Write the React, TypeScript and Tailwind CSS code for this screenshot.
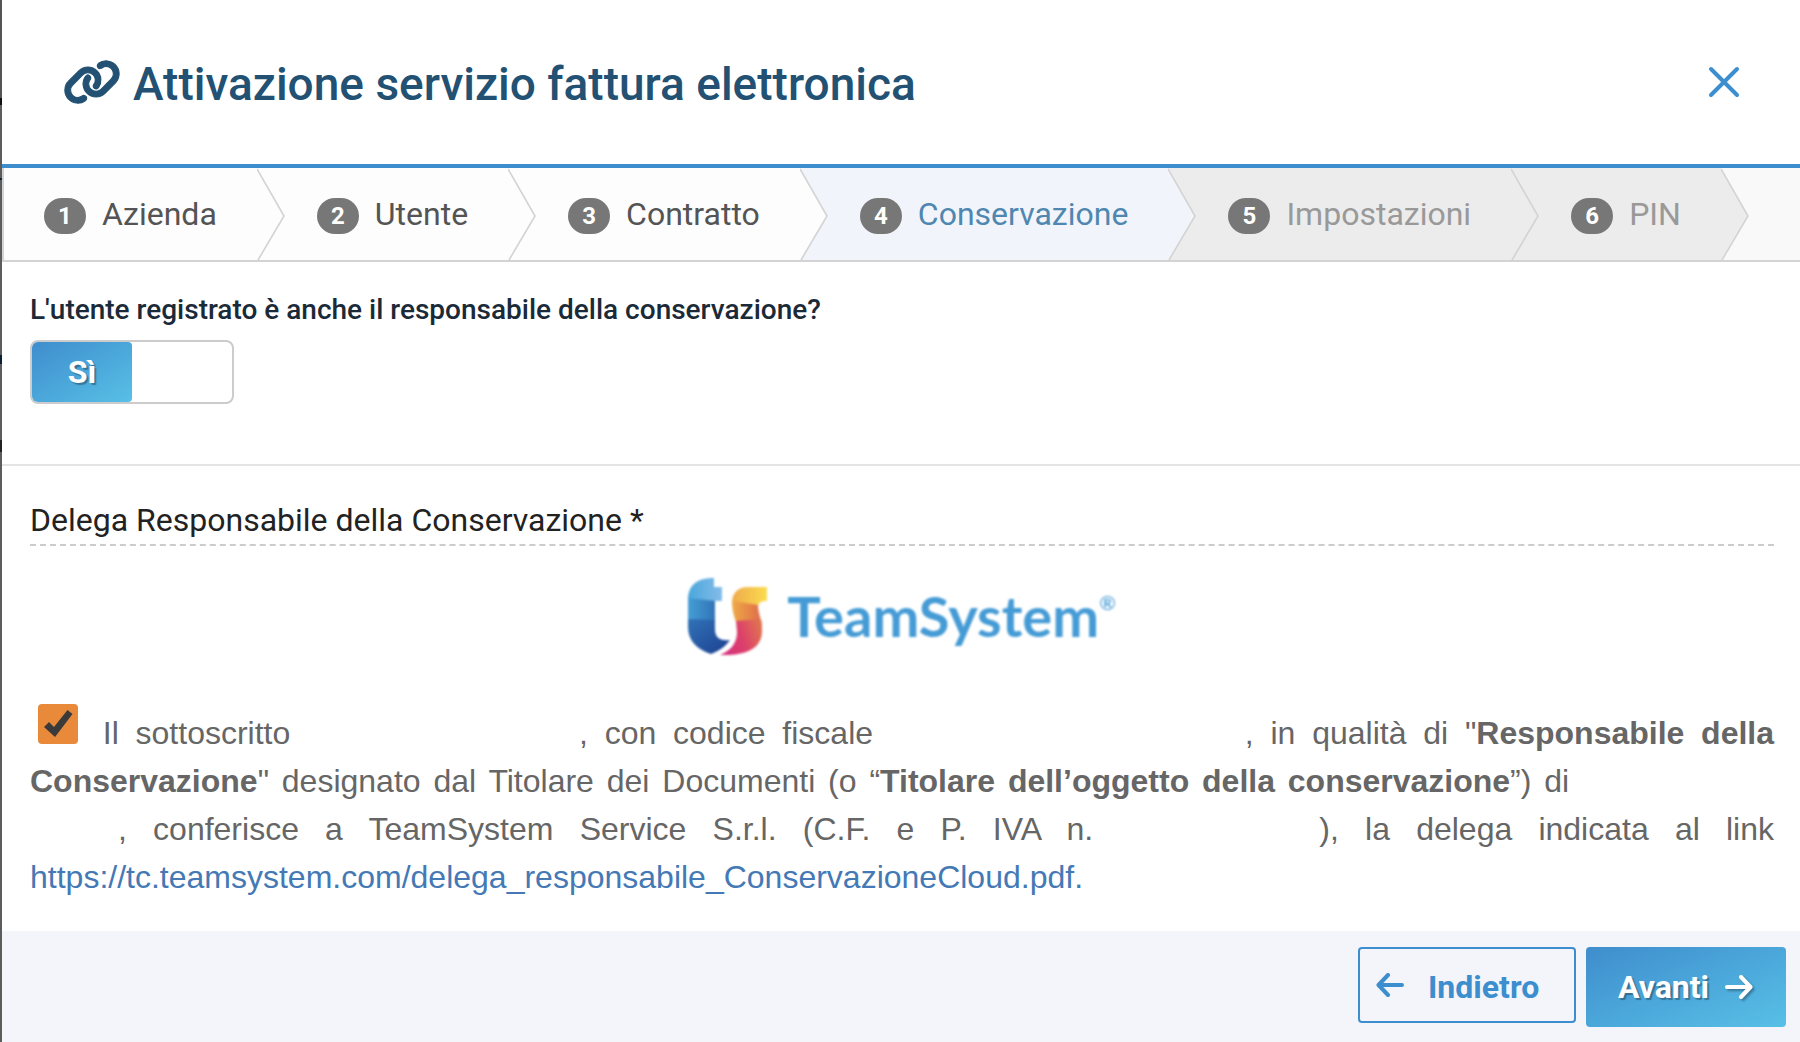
import { useState } from "react";
import { FaLink } from "react-icons/fa6";

type StepState = "done" | "current" | "todo";

const steps: { label: string; state: StepState }[] = [
  { label: "Azienda", state: "done" },
  { label: "Utente", state: "done" },
  { label: "Contratto", state: "done" },
  { label: "Conservazione", state: "current" },
  { label: "Impostazioni", state: "todo" },
  { label: "PIN", state: "todo" },
];

const stepStyles: Record<StepState, string> = {
  done: "bg-[#fdfdfd] text-[#545454] fill-[#fdfdfd]",
  current: "bg-[#f1f5fb] text-[#4f87b0] fill-[#f1f5fb]",
  todo: "bg-[#ececec] text-[#999999] fill-[#ececec]",
};

function Step({ index, label, state }: { index: number; label: string; state: StepState }) {
  return (
    <li className={`relative flex h-full ${stepStyles[state]}`} aria-current={state === "current" ? "step" : undefined}>
      <button
        type="button"
        disabled={state === "todo"}
        className={`flex items-center gap-4 pr-10 text-[32px] leading-none ${index === 1 ? "pl-10" : "pl-15"}`}
      >
        <span className="mt-1 flex h-9 w-[42px] items-center justify-center rounded-[18px] bg-[#777777] text-[24px] font-bold text-white">
          {index}
        </span>
        <span>{label}</span>
      </button>
      <svg className="absolute top-0 left-full z-10 h-full w-7" viewBox="0 0 28 92" preserveAspectRatio="none" aria-hidden="true">
        <path d="M-1 0H0L27 48L1 92H-1Z" />
        <path d="M0 1L27 48L1 92" fill="none" stroke="#d3d3d3" strokeWidth="1.6" />
      </svg>
    </li>
  );
}

function LogoMark() {
  return (
    <svg className="h-20 w-20" viewBox="0 0 80 80" aria-hidden="true">
      <defs>
        <linearGradient id="tTop" x1="0" y1="0" x2="1" y2="0">
          <stop offset="0" stopColor="#4aa6dc" />
          <stop offset="1" stopColor="#84bce8" />
        </linearGradient>
        <linearGradient id="tMid" x1="0" y1="0" x2="1" y2="0">
          <stop offset="0" stopColor="#449fd6" />
          <stop offset="1" stopColor="#3273b6" />
        </linearGradient>
        <linearGradient id="tLow" x1="0" y1="0" x2="1" y2="1">
          <stop offset="0" stopColor="#3173b8" />
          <stop offset="1" stopColor="#1c3f8e" />
        </linearGradient>
        <linearGradient id="sTop" x1="0" y1="0" x2="1" y2="0">
          <stop offset="0" stopColor="#efa94b" />
          <stop offset="1" stopColor="#fbdd4f" />
        </linearGradient>
        <linearGradient id="sMid" x1="0" y1="0" x2="1" y2="0">
          <stop offset="0" stopColor="#efaa45" />
          <stop offset="1" stopColor="#df6a4b" />
        </linearGradient>
        <linearGradient id="sLow" x1="0" y1="0.6" x2="1" y2="0.3">
          <stop offset="0" stopColor="#d6307c" />
          <stop offset="0.5" stopColor="#dc406b" />
          <stop offset="1" stopColor="#e07350" />
        </linearGradient>
      </defs>
      <path d="M0 22C0 7 9 0 26 0V9H34V23H27V25L0 22Z" fill="url(#tTop)" />
      <path d="M0 20L27 23V44L0 42Z" fill="url(#tMid)" />
      <path d="M0 41L27 42V51C27 60 32 63 42 62C37 69 31 73 23 76C8 71 0 62 0 49Z" fill="url(#tLow)" />
      <path d="M44 25C44 15 50 9 60 9H79V23H76C71 24 70 27 70 30L44 24Z" fill="url(#sTop)" />
      <path d="M44 23L70 27C70 35 74 43 74 51L48 44C46 38 44 32 44 23Z" fill="url(#sMid)" />
      <path d="M48 43L73 41C74 45 74 49 74 53C74 70 59 78 32 77C44 72 49 64 49 54Z" fill="url(#sLow)" />
    </svg>
  );
}

function Logo() {
  return (
    <div className="flex h-20 items-center gap-[19px] blur-[1px]">
      <LogoMark />
      <div className="flex items-start pb-1 font-[Lato,sans-serif] text-[56px] leading-none font-bold text-[#459bd5]">
        <span>TeamSystem</span>
        <span className="pt-1 text-[20px] leading-none font-medium">®</span>
      </div>
    </div>
  );
}

function Arrow({ direction }: { direction: "left" | "right" }) {
  return (
    <svg className="h-6 w-7" viewBox="0 0 28 24" fill="none" stroke="currentColor" strokeWidth="4" strokeLinecap="round" strokeLinejoin="round" aria-hidden="true">
      <path d={direction === "left" ? "M26 12H3M12 2L2.5 12L12 22" : "M2 12H25M16 2L25.5 12L16 22"} />
    </svg>
  );
}

/** Keeps the room of a personal value that is not shown. */
function Hidden({ className }: { className: string }) {
  return <span className={`inline-block h-4 ${className}`} aria-hidden="true" />;
}

export default function App() {
  const [isResponsible, setResponsible] = useState(true);
  const [accepted, setAccepted] = useState(true);

  return (
    <div className="flex min-h-screen bg-white font-[Roboto,sans-serif]">
      <div className="w-[2px] shrink-0 bg-[linear-gradient(#555_0_98px,#111_98px_105px,#5c5c5c_105px_178px,#123_178px_180px,#5c5c5c_180px_355px,#0b1f33_355px_364px,#5c5c5c_364px_440px,#222_440px_452px,#5c5c5c_452px)]" />
      <div role="dialog" aria-labelledby="dialog-title" className="flex min-w-0 flex-1 flex-col">
        <header className="flex h-[168px] items-center justify-between border-b-4 border-[#3d8ecf] pr-[58px] pl-[61px]">
          <h1 id="dialog-title" className="flex items-center gap-3 text-[46px] leading-none font-medium text-[#225173]">
            <FaLink className="h-[46px] w-[58px] overflow-visible stroke-[#225173] [stroke-width:12]" aria-hidden="true" />
            <span className="pt-1">Attivazione servizio fattura elettronica</span>
          </h1>
          <button type="button" aria-label="Chiudi" className="flex size-9 items-center justify-center text-[#3d8ecf]">
            <svg className="size-8" viewBox="0 0 32 32" fill="none" stroke="currentColor" strokeWidth="4" strokeLinecap="round" aria-hidden="true">
              <path d="M3 3L29 29M29 3L3 29" />
            </svg>
          </button>
        </header>

        <ol className="flex h-[94px] border-b-2 border-l-2 border-[#d3d3d3] bg-[#f9f9f9]">
          {steps.map((step, i) => (
            <Step key={step.label} index={i + 1} label={step.label} state={step.state} />
          ))}
        </ol>

        <section className="border-b-2 border-[#e4e4e4] px-7 pt-8 pb-[60px]">
          <label htmlFor="responsabile" className="block text-[28px] leading-8 font-medium text-[#1b2a38]">
            L'utente registrato è anche il responsabile della conservazione?
          </label>
          <button
            id="responsabile"
            type="button"
            role="switch"
            aria-checked={isResponsible}
            onClick={() => setResponsible(!isResponsible)}
            className={`mt-[14px] flex h-16 w-[204px] overflow-hidden rounded-lg border-2 border-[#cccccc] bg-white ${isResponsible ? "justify-start" : "justify-end"}`}
          >
            <span className="flex h-full w-1/2 items-center justify-center rounded-r-sm bg-linear-to-br from-[#3f8dcd] to-[#58c0e6] text-[32px] font-bold text-white [text-shadow:2px_2px_1px_rgba(0,0,0,0.3)]">
              {isResponsible ? "Sì" : "No"}
            </span>
          </button>
        </section>

        <section className="flex flex-col pt-8 pr-[26px] pl-7">
          <h2 className="border-b-2 border-dashed border-[#cccccc] pb-[2px] text-[32px] leading-[44px] text-[#222222]">
            Delega Responsabile della Conservazione *
          </h2>
          <div className="mt-8 flex justify-center">
            <Logo />
          </div>
          <p className="mt-[46px] text-justify font-['Liberation_Sans',sans-serif] text-[32px] leading-12 text-[#666666]">
            <span className="relative mr-2 ml-2 inline-flex size-10 align-baseline">
              <input
                type="checkbox"
                aria-label="Accetto la delega"
                checked={accepted}
                onChange={(e) => setAccepted(e.target.checked)}
                className="size-10 appearance-none rounded-sm bg-[#e98a3b]"
              />
              {accepted && (
                <svg className="pointer-events-none absolute inset-0 size-10" viewBox="0 0 40 40" aria-hidden="true">
                  <path d="M6 23L11 18L16 23L29.500 6L34.500 10L17 33Z" fill="#3a3a3a" />
                </svg>
              )}
            </span>{" "}
            Il sottoscritto <Hidden className="w-[272px]" />, con codice fiscale <Hidden className="w-[355px]" />, in qualità di "
            <strong>Responsabile della Conservazione</strong>" designato dal Titolare dei Documenti (o “
            <strong>Titolare dell’oggetto della conservazione</strong>”) di <Hidden className="w-[192px]" />{" "}
            <Hidden className="w-[88px]" />, conferisce a TeamSystem Service S.r.l. (C.F. e P. IVA n.{" "}
            <Hidden className="w-[200px]" />), la delega indicata al link{" "}
            <a href="https://tc.teamsystem.com/delega_responsabile_ConservazioneCloud.pdf" className="text-[#4479b5]">
              https://tc.teamsystem.com/delega_responsabile_ConservazioneCloud.pdf.
            </a>
          </p>
        </section>

        <footer className="mt-auto flex items-start justify-end gap-[10px] bg-[#f3f5fa] px-[14px] pt-4 pb-[15px] text-[32px] leading-none font-bold">
          <button type="button" className="flex h-[76px] w-[218px] items-center gap-6 rounded-sm border-2 border-[#3d8ecf] px-4 text-[#3d8ecf]">
            <Arrow direction="left" />
            <span className="pt-1">Indietro</span>
          </button>
          <button
            type="button"
            className="flex h-20 w-[200px] items-center gap-4 rounded-sm bg-linear-to-br from-[#3f8dcd] to-[#58c0e6] px-8 text-white [text-shadow:2px_2px_1px_rgba(0,0,0,0.3)]"
          >
            Avanti
            <span className="drop-shadow-[2px_2px_1px_rgba(0,0,0,0.3)]">
              <Arrow direction="right" />
            </span>
          </button>
        </footer>
      </div>
    </div>
  );
}
